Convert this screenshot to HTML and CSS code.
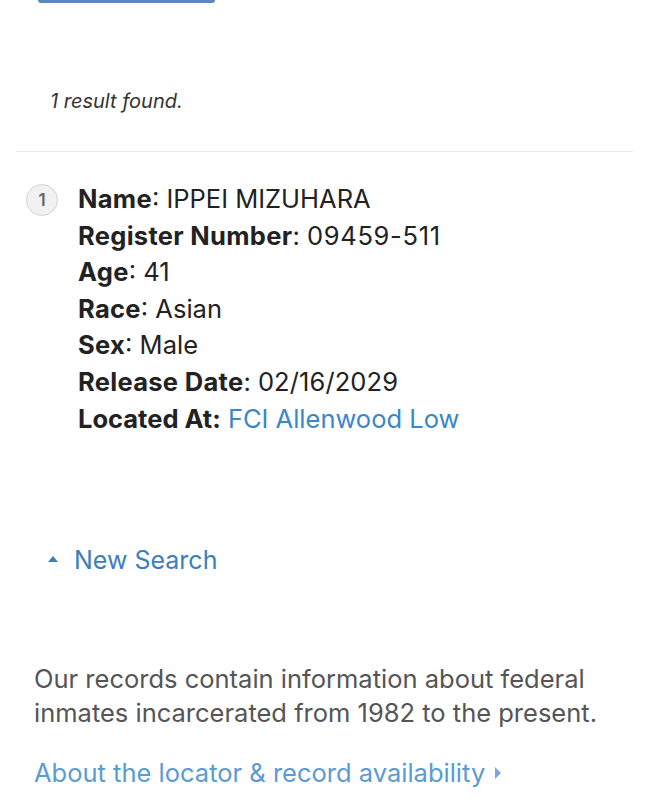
FILE: index.html
```html
<!DOCTYPE html>
<html lang="en">
<head>
<meta charset="utf-8">
<link rel="stylesheet" href="styles.css">
</head>
<body>
<div class="page">
  <div class="top-btn"></div>
  <p class="count">1 result found.</p>
  <hr class="divider">
  <div class="result">
    <span class="badge">1</span>
    <ul class="fields">
      <li><b>Name</b>: IPPEI MIZUHARA</li>
      <li><b>Register Number</b>: <span class="num">09459-511</span></li>
      <li><b>Age</b>: 41</li>
      <li><b>Race</b>: Asian</li>
      <li><b>Sex</b>: Male</li>
      <li><b>Release Date</b>: <span class="num-date">02/16/2029</span></li>
      <li><b class="tight">Located At:</b> <a class="link" href="#">FCI Allenwood Low</a></li>
    </ul>
  </div>
  <a class="new-search" href="#"><span class="up-tri"></span>New Search</a>
  <p class="about">Our records contain information about federal inmates incarcerated from 1982 to the present.</p>
  <a class="about-link" href="#">About the locator &amp; record availability<span class="right-tri"></span></a>
</div>
</body>
</html>
```
FILE: styles.css
```css
html, body {
  margin: 0;
  padding: 0;
  background: #ffffff;
}
.page {
  font-family: Inter, "Noto Sans", "Liberation Sans", sans-serif;
  color: #222;
  display: flex;
  flex-direction: column;
}
.top-btn {
  margin-left: 38px;
  width: 177px;
  height: 3px;
  background: #5d87b9;
  border-radius: 0 0 7px 7px;
  box-shadow: 0 4px 8px rgba(0,0,0,0.04);
}
.count {
  margin: 86px 0 0 50px;
  font-size: 20px;
  line-height: 24px;
  font-style: italic;
  color: #333;
}
.divider {
  margin: 38px 17px 0 16px;
  border: 0;
  height: 1px;
  background: #ebebeb;
}
.result {
  display: flex;
  align-items: flex-start;
  margin-top: 29px;
  padding-left: 26px;
}
.badge {
  box-sizing: border-box;
  width: 32px;
  height: 32px;
  margin-top: 3px;
  border-radius: 50%;
  background: #f1f1f1;
  border: 1px solid #d4d4d4;
  color: #666;
  font-size: 17px;
  font-weight: 600;
  display: flex;
  align-items: center;
  justify-content: center;
  flex-shrink: 0;
}
.fields {
  list-style: none;
  margin: 0 0 0 20px;
  padding: 0;
  font-size: 25.5px;
  line-height: 36.6px;
  color: #222;
}
.fields b {
  font-weight: 700;
  letter-spacing: 0.3px;
}
.fields b.tight {
  letter-spacing: 0;
}
.num {
  letter-spacing: 0.7px;
}
.num-date {
  letter-spacing: 0.1px;
}
.link {
  color: #3a87c6;
  text-decoration: none;
}
.new-search {
  margin: 105px 0 0 48px;
  display: flex;
  align-items: center;
  font-size: 25px;
  line-height: 36px;
  color: #3b80bd;
  text-decoration: none;
  align-self: flex-start;
}
.up-tri {
  width: 0;
  height: 0;
  border-left: 5px solid transparent;
  border-right: 5px solid transparent;
  border-bottom: 6px solid #3b80bd;
  margin-right: 16px;
  margin-top: -2px;
}
.about {
  margin: 84px 30px 0 34px;
  font-size: 25.5px;
  line-height: 33.5px;
  color: #555;
}
.about-link {
  margin: 27px 0 0 34px;
  font-size: 25.5px;
  line-height: 34px;
  color: #5a9bd2;
  text-decoration: none;
  display: flex;
  align-items: center;
  align-self: flex-start;
}
.right-tri {
  width: 0;
  height: 0;
  border-top: 6px solid transparent;
  border-bottom: 6px solid transparent;
  border-left: 6px solid #78a6de;
  margin-left: 10px;
}
```
